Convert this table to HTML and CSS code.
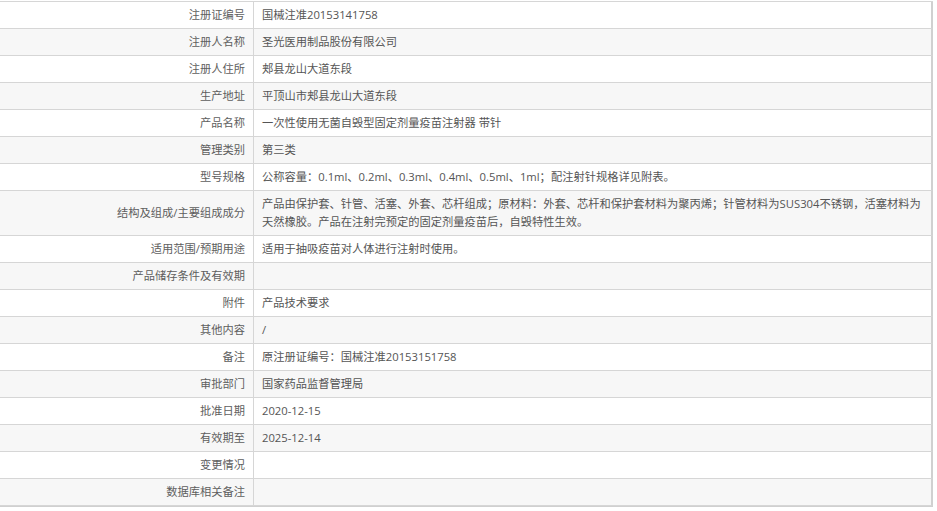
FILE: index.html
```html
<!DOCTYPE html>
<html lang="zh-CN">
<head>
<meta charset="utf-8">
<title>医疗器械注册信息</title>
<link rel="stylesheet" href="styles.css">
</head>
<body>
<table class="info">
  <colgroup><col class="col-label"><col class="col-value"></colgroup>
  <tbody>
    <tr><td class="label">注册证编号</td><td class="value">国械注准20153141758</td></tr>
    <tr><td class="label">注册人名称</td><td class="value">圣光医用制品股份有限公司</td></tr>
    <tr><td class="label">注册人住所</td><td class="value">郏县龙山大道东段</td></tr>
    <tr><td class="label">生产地址</td><td class="value">平顶山市郏县龙山大道东段</td></tr>
    <tr><td class="label">产品名称</td><td class="value">一次性使用无菌自毁型固定剂量疫苗注射器 带针</td></tr>
    <tr><td class="label">管理类别</td><td class="value">第三类</td></tr>
    <tr><td class="label">型号规格</td><td class="value">公称容量<span class="cp">：</span>0.1ml、0.2ml、0.3ml、0.4ml、0.5ml、1ml<span class="cp">；</span>配注射针规格详见附表。</td></tr>
    <tr><td class="label">结构及组成/主要组成成分</td><td class="value">产品由保护套、针管、活塞、外套、芯杆组成<span class="cp">；</span>原材料<span class="cp">：</span>外套、芯杆和保护套材料为聚丙烯<span class="cp">；</span>针管材料为SUS304不锈钢<span class="cp">，</span>活塞材料为<br>天然橡胶。产品在注射完预定的固定剂量疫苗后<span class="cp">，</span>自毁特性生效。</td></tr>
    <tr><td class="label">适用范围/预期用途</td><td class="value">适用于抽吸疫苗对人体进行注射时使用。</td></tr>
    <tr><td class="label">产品储存条件及有效期</td><td class="value"></td></tr>
    <tr><td class="label">附件</td><td class="value">产品技术要求</td></tr>
    <tr><td class="label">其他内容</td><td class="value">/</td></tr>
    <tr><td class="label">备注</td><td class="value">原注册证编号<span class="cp">：</span>国械注准20153151758</td></tr>
    <tr><td class="label">审批部门</td><td class="value">国家药品监督管理局</td></tr>
    <tr><td class="label">批准日期</td><td class="value">2020-12-15</td></tr>
    <tr><td class="label">有效期至</td><td class="value">2025-12-14</td></tr>
    <tr><td class="label">变更情况</td><td class="value"></td></tr>
    <tr><td class="label">数据库相关备注</td><td class="value"></td></tr>
  </tbody>
</table>
</body>
</html>
```

FILE: styles.css
```css
html, body {
  margin: 0;
  padding: 0;
  background: #ffffff;
}

body {
  padding-top: 1px;
  font-family: "Open Sans", "Noto Sans CJK SC", sans-serif;
  font-size: 11.25px;
  color: #555555;
}

.info {
  width: 933px;
  table-layout: fixed;
  border-collapse: separate;
  border-spacing: 0;
  border-top: 1px solid #d6d6d6;
  border-bottom: 1px solid #d0d0d0;
}

.col-label {
  width: 254px;
}

.info td {
  height: 18px;
  padding: 4px 8px;
  line-height: 18px;
  vertical-align: middle;
  border-bottom: 1px solid #d6d6d6;
}

.info tr:nth-child(even) td {
  background: #f7f7f7;
}

.label {
  text-align: right;
  border-right: 1px solid #d6d6d6;
  color: #5e5e5e;
}

.value {
  text-align: left;
  border-right: 2px solid #d0d0d0;
  color: #555555;
}

.cp {
  font-family: "Open Sans", "Noto Sans CJK TC", sans-serif;
}
```
